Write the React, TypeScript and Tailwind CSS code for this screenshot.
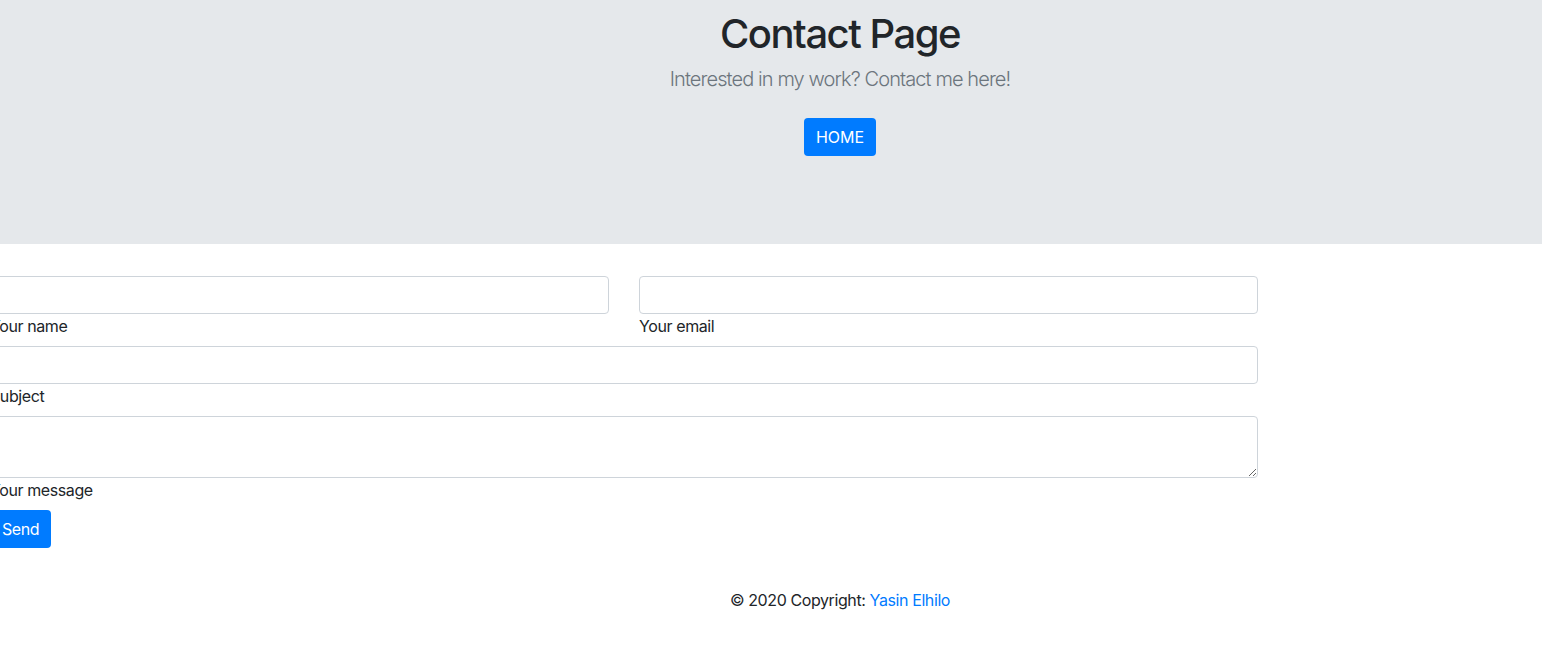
export default function App() {
  return (
    <div className="min-h-[662px] bg-white text-[#212529] overflow-hidden tracking-[-0.4px]" style={{ fontFamily: "Inter, 'Noto Sans', sans-serif" }}>
      <div className="h-[244px] bg-[#e5e8eb] pl-[138px] pt-[10px]">
        <div className="flex flex-col items-center">
          <h1 className="text-[40px] leading-[48px] font-medium tracking-[-1.5px] text-[#212529] mb-[6px]">Contact Page</h1>
          <p className="text-[20px] leading-[30px] font-light tracking-[-0.9px] text-[#6c757d]">Interested in my work? Contact me here!</p>
          <a className="mt-[24px] h-[38px] px-[12px] flex items-center rounded-[4px] bg-[#007bff] text-white text-[16px] tracking-normal">HOME</a>
        </div>
      </div>
      <form className="mt-[32px] -ml-[10px] w-[1268px] text-[16px]">
        <div className="grid grid-cols-2 gap-x-[30px]">
          <div>
            <input className="block w-full h-[38px] border border-[#ced4da] rounded-[4px] bg-white" />
            <label className="block leading-[24px] mb-[8px]">Your name</label>
          </div>
          <div>
            <input className="block w-full h-[38px] border border-[#ced4da] rounded-[4px] bg-white" />
            <label className="block leading-[24px] mb-[8px]">Your email</label>
          </div>
        </div>
        <input className="block w-full h-[38px] border border-[#ced4da] rounded-[4px] bg-white" />
        <label className="block leading-[24px] mb-[8px]">Subject</label>
        <textarea rows={2} className="block w-full h-[62px] border border-[#ced4da] rounded-[4px] bg-white" />
        <label className="block leading-[24px] mb-[8px]">Your message</label>
        <button type="button" className="h-[38px] px-[12px] rounded-[4px] bg-[#007bff] text-white text-[16px]">Send</button>
      </form>
      <div className="pl-[138px] mt-[40px] text-center text-[16px] leading-[24px]">
        © 2020 Copyright: <a className="text-[#007bff]">Yasin Elhilo</a>
      </div>
    </div>
  );
}
